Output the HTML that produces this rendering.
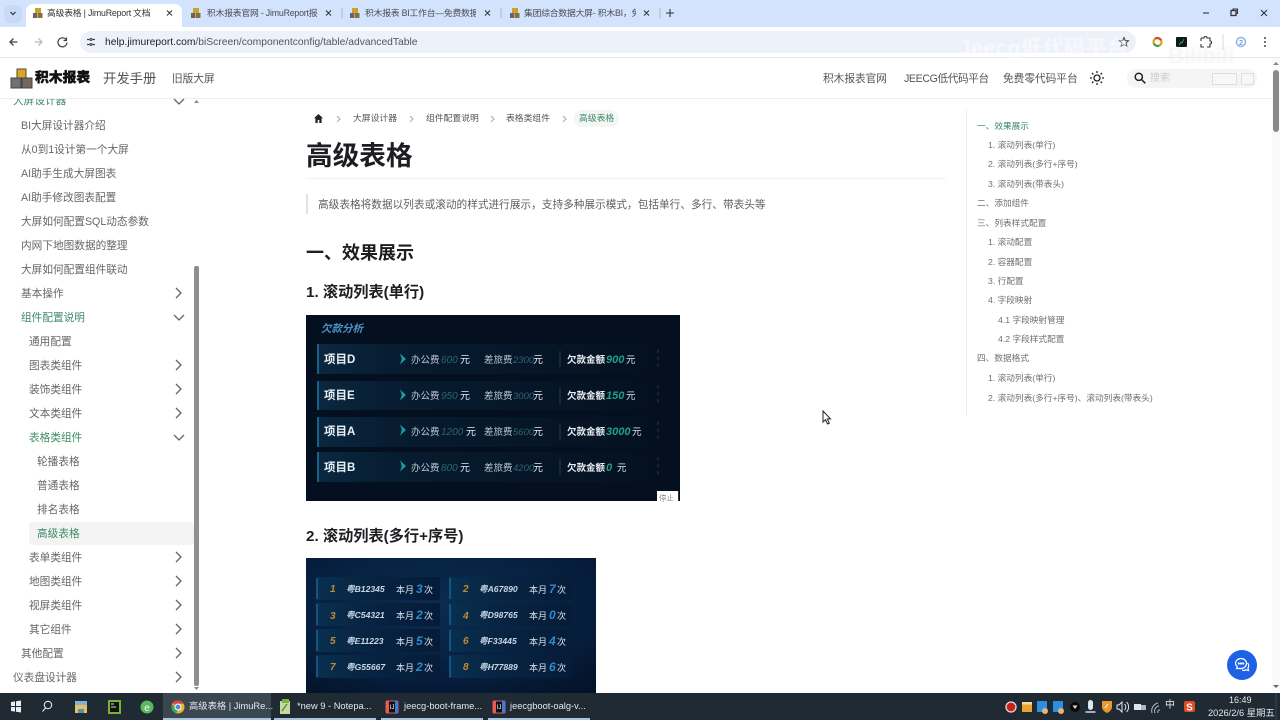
<!DOCTYPE html>
<html lang="zh-CN"><head><meta charset="utf-8"><title>高级表格 | JimuReport 文档</title>
<style>
html{margin:0;padding:0;width:1280px;height:720px;overflow:hidden;background:#fff}
body{margin:0;padding:0;width:1280px;height:720px;overflow:hidden;background:#fff;font-family:"Liberation Sans","Noto Sans CJK SC",sans-serif;position:relative;filter:blur(.35px)}
.a{position:absolute}
.t{position:absolute;white-space:nowrap;line-height:20px;height:20px}
.s{color:#666;font-size:10.67px}
.g{color:#3f8a68}
.toc{color:#707070;font-size:8.67px}
.toc.g{color:#3f8a68}
.tab{color:#4a4d52;font-size:8.8px;overflow:hidden;letter-spacing:-.2px}
.tb{color:#e4e8ec;font-size:9.3px}
svg{position:absolute;overflow:visible}
</style></head><body>

<!-- browser chrome -->
<div class="a" style="left:0;top:0;width:1280px;height:27px;background:#d3e3fd"></div>
<div class="a" style="left:4px;top:5px;width:18px;height:18px;background:#c8daf5;border-radius:6px"></div>
<div class="a" style="left:26px;top:4px;width:156px;height:24px;background:#fff;border-radius:7px 7px 0 0"></div>
<div class="a" style="left:0;top:27px;width:1280px;height:30px;background:#fff"></div>
<div class="a" style="left:0;top:57px;width:1280px;height:1px;background:#e6e8ec"></div>
<div class="a" style="left:80px;top:31px;width:1056px;height:22px;background:#edf2fa;border-radius:11px"></div>

<svg style="left:0;top:0" width="1280" height="58" fill="none">
<defs><g id="fav"><rect x="2" y="0" width="6" height="5" fill="#c9a227"/><rect x="0" y="5" width="4.500" height="5" fill="#6d6457"/><rect x="5" y="5" width="4.500" height="5" fill="#8a6d3b"/></g></defs>
<path d="M10.500 12l2.500 2.500L15.500 12" stroke="#333" stroke-width="1.200"/>
<use href="#fav" x="33" y="8"/><use href="#fav" x="191" y="8"/><use href="#fav" x="350" y="8"/><use href="#fav" x="510" y="8"/>
<g stroke="#333" stroke-width="1.100">
<path d="M167 10.500l5 5M172 10.500l-5 5M326 10.500l5 5M331 10.500l-5 5M485 10.500l5 5M490 10.500l-5 5M644 10.500l5 5M649 10.500l-5 5"/>
<path d="M666 13h8M670 9v8"/>
<path d="M1203 13h6"/>
<rect x="1231" y="10.500" width="5" height="5" stroke-width="1.300"/><path d="M1233 10v-1h4.500v4.500h-1"/>
<path d="M1261 10l6 6M1267 10l-6 6"/>
</g>
<path d="M17.500 42H10.500M13.500 38.500L10 42l3.500 3.500" stroke="#444" stroke-width="1.300"/>
<path d="M34.500 42h7M38.500 38.500l3.500 3.500L38.500 45.500" stroke="#bbb" stroke-width="1.300"/>
<path d="M66 39.500a4.500 4.500 0 1 0 1 3M66.500 37.500v3h-3" stroke="#444" stroke-width="1.200"/>
<path d="M87 39.500h2.500M92 39.500h3M87 44.500h3M92.500 44.500h2.500" stroke="#444" stroke-width="1.300"/><circle cx="91" cy="39.500" r="1" stroke="#444"/><circle cx="91" cy="44.500" r="1" stroke="#444"/>
<path d="M1124 37.500l1.300 3 3.200.3-2.400 2.100.7 3.100-2.800-1.600-2.800 1.600.7-3.100-2.400-2.100 3.200-.3z" stroke="#444" stroke-width="1"/>
<circle cx="1157.500" cy="42" r="4" stroke="#e0a020" stroke-width="2.200"/><path d="M1155 38.800a4 4 0 0 1 6 1.500" stroke="#d9483b" stroke-width="2.200"/><path d="M1154 43.500a4 4 0 0 0 5 2.200" stroke="#38a35a" stroke-width="2.200"/>
<rect x="1176" y="37" width="11" height="10" rx="1" fill="#10181c"/><path d="M1179 45l2-3 1 1 2-4" stroke="#3fb27f" stroke-width=".8"/>
<path d="M1201 38h3a1.500 1.500 0 0 1 3 0h3v3a1.500 1.500 0 0 1 0 3v3h-3M1204 47h-3v-3M1201 41v-3" stroke="#333" stroke-width="1.100"/>
<path d="M1223 34v16" stroke="#d5d9df"/>
<circle cx="1241" cy="42" r="4.500" stroke="#8fb4e8" stroke-width="1.500"/><text x="1241" y="45" font-size="7" fill="#2a62b8" text-anchor="middle" font-family="Liberation Sans">2</text>
<circle cx="1265" cy="38" r="1" fill="#444"/><circle cx="1265" cy="42" r="1" fill="#444"/><circle cx="1265" cy="46" r="1" fill="#444"/>
<path d="M342 8v10M501 8v10M660 8v10" stroke="#a9b6cb"/>
</svg>

<div class="t tab" style="left:47px;top:3px;width:110px;color:#333">高级表格 | JimuReport 文档</div>
<div class="t tab" style="left:207px;top:3px;width:111px">积木报表官网 - JimuReport报表</div>
<div class="t tab" style="left:365px;top:3px;width:111px">积木报表 BI工作台—免费数据分析</div>
<div class="t tab" style="left:524px;top:3px;width:112px">集团综合数据大屏- 积木BI，免费</div>
<div class="t" style="left:105px;top:32px;font-size:10.300px;color:#202124;line-height:21px">help.jimureport.com<span style="color:#50565e">/biScreen/componentconfig/table/advancedTable</span></div>

<!-- watermark -->
<div class="t" style="left:959px;top:39px;font-size:21px;font-weight:bold;color:rgba(255,255,255,.55);letter-spacing:.5px;filter:blur(.8px)">Jeecg低代码平台</div>
<div class="t" style="left:1168px;top:46px;font-size:22px;font-weight:bold;color:rgba(225,225,225,.35);filter:blur(1px)">Bilibili</div>

<!-- site nav -->
<div class="a" style="left:0;top:98px;width:1272px;height:1px;background:#eeeff1"></div>
<svg style="left:0;top:0" width="40" height="100">
<rect x="17" y="69" width="9" height="9" fill="#d8a526" stroke="#554a2a"/>
<rect x="11" y="78" width="10" height="10" fill="#6e7179" stroke="#444"/><rect x="22" y="78" width="10" height="10" fill="#72695c" stroke="#444"/>
</svg>
<div class="t" style="left:35px;top:68px;font-size:13.800px;font-weight:900;color:#111;-webkit-text-stroke:.4px #111">积木报表</div>
<div class="t" style="left:103px;top:69px;font-size:13.330px;color:#555">开发手册</div>
<div class="t" style="left:172px;top:69px;font-size:10.670px;color:#555">旧版大屏</div>
<div class="t" style="left:823px;top:69px;font-size:10.670px;color:#555">积木报表官网</div>
<div class="t" style="left:904px;top:69px;font-size:10.670px;color:#555;letter-spacing:-.4px">JEECG低代码平台</div>
<div class="t" style="left:1003px;top:69px;font-size:10.670px;color:#555">免费零代码平台</div>
<svg style="left:1090px;top:71px" width="14" height="14" fill="none" stroke="#222" stroke-width="1.300"><circle cx="7" cy="7" r="3"/><path d="M7 0v2M7 12v2M0 7h2M12 7h2M2 2l1.400 1.400M10.600 10.600L12 12M2 12l1.400-1.400M10.600 3.400L12 2"/></svg>
<div class="a" style="left:1127px;top:69px;width:130px;height:19px;background:#f4f5f6;border-radius:9px"></div>
<svg style="left:1134px;top:72px" width="12" height="12" fill="none" stroke="#222" stroke-width="1.500"><circle cx="4.800" cy="4.800" r="3.600"/><path d="M7.500 7.500l3.800 3.800"/></svg>
<div class="t" style="left:1150px;top:69px;font-size:10px;color:#ccc">搜索</div>
<div class="a" style="left:1212px;top:73px;width:23px;height:10px;border:1px solid #dedede;background:#f7f7f7"></div>
<div class="a" style="left:1241px;top:73px;width:11px;height:10px;border:1px solid #dedede;background:#f7f7f7"></div>

<!-- sidebar -->
<div class="a" style="left:29px;top:522px;width:165px;height:23px;background:#f3f3f3;border-radius:3px"></div>
<div class="a" style="left:0;top:99px;width:190px;height:12px;overflow:hidden"><div class="t s g" style="left:13px;top:-8px">大屏设计器</div></div>
<div class="a" style="left:0;top:1px;width:0;height:0">
<div class="t s" style="left:21px;top:115px">BI大屏设计器介绍</div>
<div class="t s" style="left:21px;top:139px">从0到1设计第一个大屏</div>
<div class="t s" style="left:21px;top:163px">AI助手生成大屏图表</div>
<div class="t s" style="left:21px;top:187px">AI助手修改图表配置</div>
<div class="t s" style="left:21px;top:211px">大屏如何配置SQL动态参数</div>
<div class="t s" style="left:21px;top:235px">内网下地图数据的整理</div>
<div class="t s" style="left:21px;top:259px">大屏如何配置组件联动</div>
<div class="t s" style="left:21px;top:283px">基本操作</div>
<div class="t s g" style="left:21px;top:307px">组件配置说明</div>
<div class="t s" style="left:29px;top:331px">通用配置</div>
<div class="t s" style="left:29px;top:355px">图表类组件</div>
<div class="t s" style="left:29px;top:379px">装饰类组件</div>
<div class="t s" style="left:29px;top:403px">文本类组件</div>
<div class="t s g" style="left:29px;top:427px">表格类组件</div>
<div class="t s" style="left:37px;top:451px">轮播表格</div>
<div class="t s" style="left:37px;top:475px">普通表格</div>
<div class="t s" style="left:37px;top:499px">排名表格</div>
<div class="t s g" style="left:37px;top:523px">高级表格</div>
<div class="t s" style="left:29px;top:547px">表单类组件</div>
<div class="t s" style="left:29px;top:571px">地图类组件</div>
<div class="t s" style="left:29px;top:595px">视屏类组件</div>
<div class="t s" style="left:29px;top:619px">其它组件</div>
<div class="t s" style="left:21px;top:643px">其他配置</div>
<div class="t s" style="left:13px;top:667px">仪表盘设计器</div>
</div>
<svg style="left:170px;top:90px" width="20" height="600" fill="none" stroke="#666" stroke-width="1.300">
<path d="M4 9l5 5 5-5M4 225l5 5 5-5M4 345l5 5 5-5"/>
<path d="M6 198l5 5-5 5M6 270l5 5-5 5M6 294l5 5-5 5M6 318l5 5-5 5M6 462l5 5-5 5M6 486l5 5-5 5M6 510l5 5-5 5M6 534l5 5-5 5M6 558l5 5-5 5M6 582l5 5-5 5"/>
</svg>
<div class="a" style="left:194px;top:266px;width:5px;height:420px;background:#8f8f8f;border-radius:2px"></div>
<svg style="left:193px;top:98px" width="7" height="6"><path d="M1 5l2.500-3L6 5z" fill="#888"/></svg>
<svg style="left:193px;top:686px" width="7" height="6"><path d="M1 1l2.500 3L6 1z" fill="#888"/></svg>

<!-- breadcrumb -->
<svg style="left:313px;top:113px" width="11" height="11"><path d="M5.500 1L1 5.200h1.400V10h2.300V7h1.600v3h2.300V5.200H10z" fill="#222"/></svg>
<svg style="left:336px;top:114px" width="240" height="10" fill="none" stroke="#aaa" stroke-width="1"><path d="M1 2l3 3-3 3M74 2l3 3-3 3M155 2l3 3-3 3M227 2l3 3-3 3"/></svg>
<div class="t" style="left:353px;top:108px;font-size:8.800px;color:#555">大屏设计器</div>
<div class="t" style="left:426px;top:108px;font-size:8.800px;color:#555">组件配置说明</div>
<div class="t" style="left:506px;top:108px;font-size:8.800px;color:#555">表格类组件</div>
<div class="a" style="left:574px;top:110px;width:45px;height:17px;background:#f4f6f5;border-radius:8px"></div>
<div class="t g" style="left:579px;top:108px;font-size:8.800px">高级表格</div>

<!-- content -->
<div class="t" style="left:306px;top:146px;font-size:26.670px;font-weight:bold;color:#1c1e21">高级表格</div>
<div class="a" style="left:306px;top:178px;width:640px;height:1px;background:#f1f1f3"></div>
<div class="a" style="left:306px;top:194px;width:2px;height:20px;background:#e2e2e3"></div>
<div class="t" style="left:318px;top:195px;font-size:10.670px;color:#606060">高级表格将数据以列表或滚动的样式进行展示，支持多种展示模式，包括单行、多行、带表头等</div>
<div class="t" style="left:306px;top:243px;font-size:18px;font-weight:bold;color:#1c1e21">一、效果展示</div>
<div class="t" style="left:306px;top:283px;font-size:15.200px;font-weight:bold;color:#1c1e21">1. 滚动列表(单行)</div>
<div class="t" style="left:306px;top:527px;font-size:15.200px;font-weight:bold;color:#1c1e21">2. 滚动列表(多行+序号)</div>

<!-- image 1 -->
<svg style="left:306px;top:315px;filter:blur(.3px)" width="374" height="186" viewBox="0 0 374 186" font-family="Liberation Sans,Noto Sans CJK SC,sans-serif">
<defs>
<linearGradient id="r1" x1="0" x2="1" y1="0" y2="0"><stop offset="0" stop-color="#0a2840"/><stop offset=".22" stop-color="#071c30"/><stop offset=".7" stop-color="#061526"/><stop offset="1" stop-color="#04101f"/></linearGradient>
<path id="ar" d="M0-5.500L6 0 0 5.500 1.800 0z" fill="#1e9aa0"/>
</defs>
<rect width="374" height="186" fill="#04101f"/>
<text x="15" y="17" font-size="10.500" font-style="italic" font-weight="bold" fill="#4e93c6">欠款分析</text>
<rect x="11" y="29" width="343" height="30" fill="url(#r1)"/><rect x="11" y="66" width="343" height="29" fill="url(#r1)"/><rect x="11" y="102" width="343" height="30" fill="url(#r1)"/><rect x="11" y="137" width="343" height="30" fill="url(#r1)"/>
<path d="M12 29v30M12 66v29M12 102v30M12 137v30" stroke="#17608a" stroke-width="2"/>
<path d="M254 36v16M254 73v16M254 109v16M254 144v16" stroke="#2c3a4c"/>
<path d="M352 34v20M352 70v20M352 106v20M352 142v20" stroke="#223244" stroke-dasharray="4 3"/>
<g font-weight="bold" font-size="11.500" fill="#eaf1f6"><text x="18" y="48">项目D</text><text x="18" y="84">项目E</text><text x="18" y="120">项目A</text><text x="18" y="156">项目B</text></g>
<use href="#ar" x="94" y="44"/><use href="#ar" x="94" y="80"/><use href="#ar" x="94" y="115"/><use href="#ar" x="94" y="151"/>
<g font-size="9.500" fill="#b8c6d2">
<text x="105" y="48">办公费</text><text x="178" y="48">差旅费</text>
<text x="105" y="84">办公费</text><text x="178" y="84">差旅费</text>
<text x="105" y="120">办公费</text><text x="178" y="120">差旅费</text>
<text x="105" y="156">办公费</text><text x="178" y="156">差旅费</text>
</g>
<g font-size="10" fill="#e2e9ef"><text x="154" y="48">元</text><text x="227" y="48">元</text><text x="154" y="84">元</text><text x="227" y="84">元</text><text x="160" y="120">元</text><text x="227" y="120">元</text><text x="154" y="156">元</text><text x="227" y="156">元</text></g>
<g font-size="10" font-style="italic" fill="#2a6470">
<text x="135" y="48">600</text><text x="207" y="48" font-size="9.500">2300</text><text x="135" y="84">950</text><text x="207" y="84" font-size="9.500">3000</text><text x="135" y="120">1200</text><text x="207" y="120" font-size="9.500">5600</text><text x="135" y="156">800</text><text x="207" y="156" font-size="9.500">4200</text>
</g>
<g font-size="9.500" font-weight="bold" fill="#eaf1f6"><text x="261" y="48">欠款金额</text><text x="261" y="84">欠款金额</text><text x="261" y="120">欠款金额</text><text x="261" y="156">欠款金额</text></g>
<g font-size="11" font-weight="bold" font-style="italic" fill="#1f9f8f"><text x="300" y="48">900</text><text x="300" y="84">150</text><text x="300" y="120">3000</text><text x="300" y="156">0</text></g>
<g font-size="9.500" fill="#dfe7ee"><text x="320" y="48">元</text><text x="320" y="84">元</text><text x="326" y="120">元</text><text x="311" y="156">元</text></g>
<rect x="351" y="176" width="21" height="10" fill="#fff"/><rect x="372" y="176" width="1" height="10" fill="#333"/>
<text x="353" y="185.500" font-size="7.500" fill="#888">停止</text>
</svg>

<!-- image 2 -->
<svg style="left:306px;top:558px;filter:blur(.3px)" width="290" height="135" viewBox="0 0 290 135" font-family="Liberation Sans,Noto Sans CJK SC,sans-serif">
<defs>
<radialGradient id="bg2" cx=".45" cy=".35" r=".8"><stop offset="0" stop-color="#0a2c50"/><stop offset=".7" stop-color="#061d3c"/><stop offset="1" stop-color="#041329"/></radialGradient>
<linearGradient id="r2" x1="0" x2="1" y1="0" y2="0"><stop offset="0" stop-color="#09304f"/><stop offset=".4" stop-color="#072442"/><stop offset="1" stop-color="#061c38"/></linearGradient>
</defs>
<rect width="290" height="135" fill="url(#bg2)"/>
<g fill="url(#r2)">
<rect x="10" y="19" width="124" height="23"/><rect x="143" y="19" width="123" height="23"/>
<rect x="10" y="45" width="124" height="23"/><rect x="143" y="45" width="123" height="23"/>
<rect x="10" y="71" width="124" height="23"/><rect x="143" y="71" width="123" height="23"/>
<rect x="10" y="97" width="124" height="23"/><rect x="143" y="97" width="123" height="23"/>
</g>
<path d="M11 20v21M11 46v21M11 72v21M11 98v21M144 20v21M144 46v21M144 72v21M144 98v21" stroke="#125582" stroke-width="2"/>
<g font-size="10" font-style="italic" font-weight="bold" fill="#c78a34"><text x="24" y="34">1</text><text x="24" y="61">3</text><text x="24" y="86">5</text><text x="24" y="112">7</text><text x="157" y="34">2</text><text x="157" y="61">4</text><text x="157" y="86">6</text><text x="157" y="112">8</text></g>
<g font-size="8.600" font-style="italic" font-weight="bold" fill="#c9d8e6"><text x="40" y="34">粤B12345</text><text x="40" y="60">粤C54321</text><text x="40" y="86">粤E11223</text><text x="40" y="112">粤G55667</text><text x="173" y="34">粤A67890</text><text x="173" y="60">粤D98765</text><text x="173" y="86">粤F33445</text><text x="173" y="112">粤H77889</text></g>
<g font-size="9" fill="#d8e2ec"><text x="90" y="35">本月</text><text x="118" y="35">次</text><text x="90" y="61">本月</text><text x="118" y="61">次</text><text x="90" y="87">本月</text><text x="118" y="87">次</text><text x="90" y="113">本月</text><text x="118" y="113">次</text>
<text x="223" y="35">本月</text><text x="251" y="35">次</text><text x="223" y="61">本月</text><text x="251" y="61">次</text><text x="223" y="87">本月</text><text x="251" y="87">次</text><text x="223" y="113">本月</text><text x="251" y="113">次</text></g>
<g font-size="12" font-style="italic" font-weight="bold" fill="#2a8ccc"><text x="110" y="35">3</text><text x="110" y="61">2</text><text x="110" y="87">5</text><text x="110" y="113">2</text><text x="243" y="35">7</text><text x="243" y="61">0</text><text x="243" y="87">4</text><text x="243" y="113">6</text></g>
</svg>

<!-- toc -->
<div class="a" style="left:966px;top:110px;width:1px;height:306px;background:#eeeef0"></div>
<div class="t toc g" style="left:977px;top:116px">一、效果展示</div>
<div class="t toc" style="left:988px;top:135px">1. 滚动列表(单行)</div>
<div class="t toc" style="left:988px;top:154px">2. 滚动列表(多行+序号)</div>
<div class="t toc" style="left:988px;top:174px">3. 滚动列表(带表头)</div>
<div class="t toc" style="left:977px;top:193px">二、添加组件</div>
<div class="t toc" style="left:977px;top:213px">三、列表样式配置</div>
<div class="t toc" style="left:988px;top:232px">1. 滚动配置</div>
<div class="t toc" style="left:988px;top:252px">2. 容器配置</div>
<div class="t toc" style="left:988px;top:271px">3. 行配置</div>
<div class="t toc" style="left:988px;top:290px">4. 字段映射</div>
<div class="t toc" style="left:998px;top:310px">4.1 字段映射管理</div>
<div class="t toc" style="left:998px;top:329px">4.2 字段样式配置</div>
<div class="t toc" style="left:977px;top:348px">四、数据格式</div>
<div class="t toc" style="left:988px;top:368px">1. 滚动列表(单行)</div>
<div class="t toc" style="left:988px;top:388px">2. 滚动列表(多行+序号)、滚动列表(带表头)</div>

<!-- page scrollbar -->
<div class="a" style="left:1272px;top:58px;width:8px;height:635px;background:#fafafa"></div>
<div class="a" style="left:1273px;top:70px;width:6px;height:62px;background:#8a8a8a;border-radius:3px"></div>
<svg style="left:1272px;top:60px" width="8" height="6"><path d="M1 5l3-3 3 3z" fill="#888"/></svg>
<svg style="left:1272px;top:684px" width="8" height="6"><path d="M1 1l3 3 3-3z" fill="#666"/></svg>

<!-- cursor -->
<svg style="left:822px;top:410px" width="10" height="15"><path d="M1 1v11l2.500-2.300L5.500 14l1.800-.8-2-4.300H8.500z" fill="#fff" stroke="#222" stroke-width="1"/></svg>

<!-- chat -->
<div class="a" style="left:1227px;top:650px;width:30px;height:30px;border-radius:50%;background:#1d62e6"></div>
<svg style="left:1234px;top:657px" width="16" height="16" fill="none" stroke="#fff" stroke-width="1.200"><path d="M7 1.500a5.500 5 0 0 1 5.500 5A5.500 5 0 0 1 7 11.500H2.500l.8-1.800A5 5 0 0 1 1.500 6.500 5.500 5 0 0 1 7 1.500z"/><path d="M13.500 6a4 4 0 0 1 .5 5l.5 2.500-2.500-.7a4 4 0 0 1-4 .2"/><circle cx="4.800" cy="6.500" r=".5"/><circle cx="7" cy="6.500" r=".5"/><circle cx="9.200" cy="6.500" r=".5"/></svg>

<!-- taskbar -->
<div class="a" style="left:0;top:693px;width:1280px;height:27px;background:#1f2a33"></div>
<div class="a" style="left:163px;top:693px;width:108px;height:27px;background:#3b4750"></div>
<div class="a" style="left:163px;top:718px;width:108px;height:2px;background:#a9c4dc"></div>
<div class="a" style="left:274px;top:718px;width:102px;height:2px;background:#a9c4dc"></div>
<div class="a" style="left:381px;top:718px;width:102px;height:2px;background:#a9c4dc"></div>
<div class="a" style="left:488px;top:718px;width:102px;height:2px;background:#a9c4dc"></div>
<svg style="left:0;top:693px" width="600" height="27" fill="none">
<path d="M11 9l4-.6v4.600h-4zM16 8.200l5-.7v5.500h-5zM11 14h4v4.600l-4-.6zM16 14h5v5.500l-5-.7z" fill="#e8edf1"/>
<circle cx="48" cy="12" r="3.700" stroke="#dfe5ea" stroke-width="1.100"/><path d="M45.500 15l-3 3.500" stroke="#dfe5ea" stroke-width="1.100"/>
<rect x="75" y="8" width="12" height="12" fill="#e9c15c"/><rect x="75" y="8" width="12" height="4" fill="#7db3d8"/><rect x="78" y="16" width="6" height="4" fill="#5a90b8"/>
<rect x="108" y="7" width="13" height="14" fill="#7bb32e"/><rect x="110" y="9" width="9" height="10" fill="#111"/><path d="M111 11h3M111 14h5" stroke="#ddd"/>
<circle cx="147" cy="14" r="6.500" fill="#5cb85c"/><text x="147" y="18" font-size="10" fill="#fff" text-anchor="middle" font-family="Liberation Sans">e</text>
<circle cx="178" cy="14" r="6.500" fill="#e8b52c"/><path d="M178 7.500a6.500 6.500 0 0 1 5.600 3.200H178l-3 1.500-2.500-2.800A6.500 6.500 0 0 1 178 7.500z" fill="#d9453a"/><path d="M172 11.500a6.500 6.500 0 0 0 4 8.700l3-4.500z" fill="#3aa45a"/><circle cx="178" cy="14" r="3" fill="#4e8fe6" stroke="#fff"/>
<rect x="280" y="8" width="10" height="13" fill="#c5d9a4"/><rect x="282" y="6" width="7" height="4" fill="#7cb342"/><path d="M282 18l5-7" stroke="#5a8f2a" stroke-width="1.500"/>
<rect x="386" y="8" width="12" height="12" rx="1" fill="#111" stroke="#e0527a"/><rect x="386" y="8" width="3" height="12" fill="#e2604a"/><rect x="395" y="8" width="3" height="12" fill="#3a7be0"/><text x="392" y="16" font-size="6" fill="#fff" text-anchor="middle" font-family="Liberation Sans">IJ</text>
<rect x="493" y="8" width="12" height="12" rx="1" fill="#111" stroke="#e0527a"/><rect x="493" y="8" width="3" height="12" fill="#e2604a"/><rect x="502" y="8" width="3" height="12" fill="#3a7be0"/><text x="499" y="16" font-size="6" fill="#fff" text-anchor="middle" font-family="Liberation Sans">IJ</text>
</svg>
<div class="t tb" style="left:189px;top:696px">高级表格 | JimuRe...</div>
<div class="t tb" style="left:297px;top:696px">*new 9 - Notepa...</div>
<div class="t tb" style="left:404px;top:696px">jeecg-boot-frame...</div>
<div class="t tb" style="left:510px;top:696px">jeecgboot-oalg-v...</div>
<svg style="left:1000px;top:693px" width="280" height="27" fill="none">
<circle cx="11" cy="14" r="5" fill="#c9201c" stroke="#ddd" stroke-width="1.300"/>
<rect x="22" y="9" width="10" height="10" fill="#e7a52e"/><rect x="22" y="9" width="10" height="2.500" fill="#f2d9a0"/>
<rect x="37" y="8" width="10" height="11" fill="#2a8fe0"/><circle cx="45" cy="18" r="3" fill="#eab27a"/>
<rect x="53" y="8" width="10" height="11" fill="#2a8fe0"/><circle cx="61" cy="18" r="3" fill="#eab27a"/>
<circle cx="75" cy="14" r="5" fill="#0a0a0a"/><path d="M72.500 12.500h5L75 16z" fill="#ddd"/>
<rect x="88" y="7" width="5" height="10" rx="2.500" fill="#dfe5ea"/><path d="M85.500 19h10" stroke="#aab" stroke-width="2"/>
<path d="M102 8h10v6c0 3-3 5-5 6-2-1-5-3-5-6z" fill="#e89a2c"/><path d="M105 15l3-4" stroke="#fff"/>
<path d="M117 12h2l3-3v10l-3-3h-2zM124.500 11a4 4 0 0 1 0 6M126.500 9a7 7 0 0 1 0 10" stroke="#dfe5ea"/>
<rect x="134" y="11" width="7" height="6" fill="#dfe5ea"/><rect x="141" y="12" width="5" height="5" fill="#aeb8c0"/>
<path d="M152 20a8 8 0 0 1 6-10M155 20a5 5 0 0 1 4-7M158 20a2 2 0 0 1 2-3" stroke="#aeb8c0"/>
<rect x="184" y="8" width="11" height="11" rx="2" fill="#e04a24"/><text x="189.500" y="17.500" font-size="10" font-weight="bold" fill="#fff" text-anchor="middle" font-family="Liberation Sans">S</text>
<path d="M276 0v27" stroke="#3a4650"/>
</svg>
<div class="t" style="left:1165px;top:696px;font-size:10px;color:#e4e8ec">中</div>
<div class="t" style="left:1229px;top:690px;font-size:9px;color:#e4e8ec">16:49</div>
<div class="t" style="left:1208px;top:703px;font-size:9.300px;color:#e4e8ec">2026/2/6 星期五</div>
</body></html>
